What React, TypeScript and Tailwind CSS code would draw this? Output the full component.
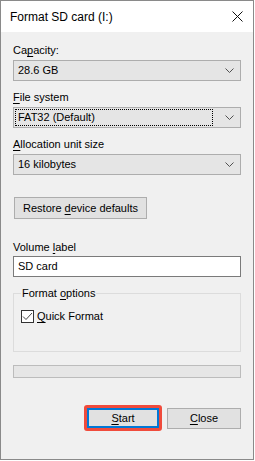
import React from 'react'

function Chevron() {
  return (
    <svg width="9" height="5" viewBox="0 0 9 5" className="shrink-0">
      <path d="M0.5 0.5 L4.5 4.5 L8.5 0.5" fill="none" stroke="#505050" strokeWidth="1" />
    </svg>
  )
}

function Key({ children }: { children: React.ReactNode }) {
  return <span className="underline underline-offset-[2px] decoration-[1px]">{children}</span>
}

function Combo({ value, focused }: { value: string; focused?: boolean }) {
  return (
    <div className="mt-[2px] flex h-[21px] items-center border border-[#adadad] bg-[#e5e5e5] pr-[6px]">
      {focused ? (
        <div className="ml-[1px] mr-[12px] flex h-[17px] flex-1 items-center border border-dotted border-black pl-[2px]">
          {value}
        </div>
      ) : (
        <div className="flex-1 pl-[4px]">{value}</div>
      )}
      <Chevron />
    </div>
  )
}

export default function App() {
  return (
    <div className="h-[461px] w-[255px] bg-white" style={{ fontFamily: '"Liberation Sans", Arial, sans-serif' }}>
      <div className="flex h-[460px] w-[254px] flex-col border border-[#8a8a8a] bg-[#f0f0f0] text-[11px] leading-[15px] text-black">
        {/* title bar */}
        <div className="flex h-[31px] shrink-0 items-center justify-between bg-white pl-[9px] pr-[10px]">
          <span className="text-[12px] leading-[16px]">Format SD card (I:)</span>
          <svg width="11" height="11" viewBox="0 0 11 11">
            <path d="M0.5 0.5 L10.5 10.5 M10.5 0.5 L0.5 10.5" stroke="#111" strokeWidth="1" />
          </svg>
        </div>

        <div className="flex flex-col px-[12px] pt-[11px]">
          <div>
            Ca<Key>p</Key>acity:
          </div>
          <Combo value="28.6 GB" />

          <div className="mt-[9px]">
            <Key>F</Key>ile system
          </div>
          <Combo value="FAT32 (Default)" focused />

          <div className="mt-[9px]">
            <Key>A</Key>llocation unit size
          </div>
          <Combo value="16 kilobytes" />

          <button className="ml-[1px] mt-[22px] h-[22px] w-[133px] border border-[#adadad] bg-[#e1e1e1] text-center">
            Restore <Key>d</Key>evice defaults
          </button>

          <div className="mt-[21px]">
            Volume <Key>l</Key>abel
          </div>
          <div className="mt-[1px] flex h-[21px] items-center border border-[#7a7a7a] bg-white pl-[4px]">SD card</div>

          <fieldset className="mt-[9px] h-[66px] border border-[#dcdcdc] px-[7px]">
            <legend className="px-[1px]">
              Format <Key>o</Key>ptions
            </legend>
            <label className="mt-[8px] flex items-center gap-[3px]">
              <span className="flex h-[13px] w-[13px] items-center justify-center border border-[#333] bg-white">
                <svg width="11" height="9" viewBox="0 0 11 9">
                  <path d="M1 4.5 L4 7.5 L10 1" fill="none" stroke="#444" strokeWidth="1" />
                </svg>
              </span>
              <span>
                <Key>Q</Key>uick Format
              </span>
            </label>
          </fieldset>

          <div className="mt-[13px] h-[13px] border border-[#bcbcbc] bg-[#e6e6e6]" />

          <div className="mt-[27px] flex items-center justify-end gap-[5px]">
            <div className="rounded-[3px] border-[3px] border-[#f04b3c]">
              <button className="h-[20px] w-[72px] border-2 border-[#0078d7] bg-[#e1e1e1]">
                <Key>S</Key>tart
              </button>
            </div>
            <button className="h-[21px] w-[74px] border border-[#adadad] bg-[#e1e1e1]">
              <Key>C</Key>lose
            </button>
          </div>
        </div>
      </div>
    </div>
  )
}
